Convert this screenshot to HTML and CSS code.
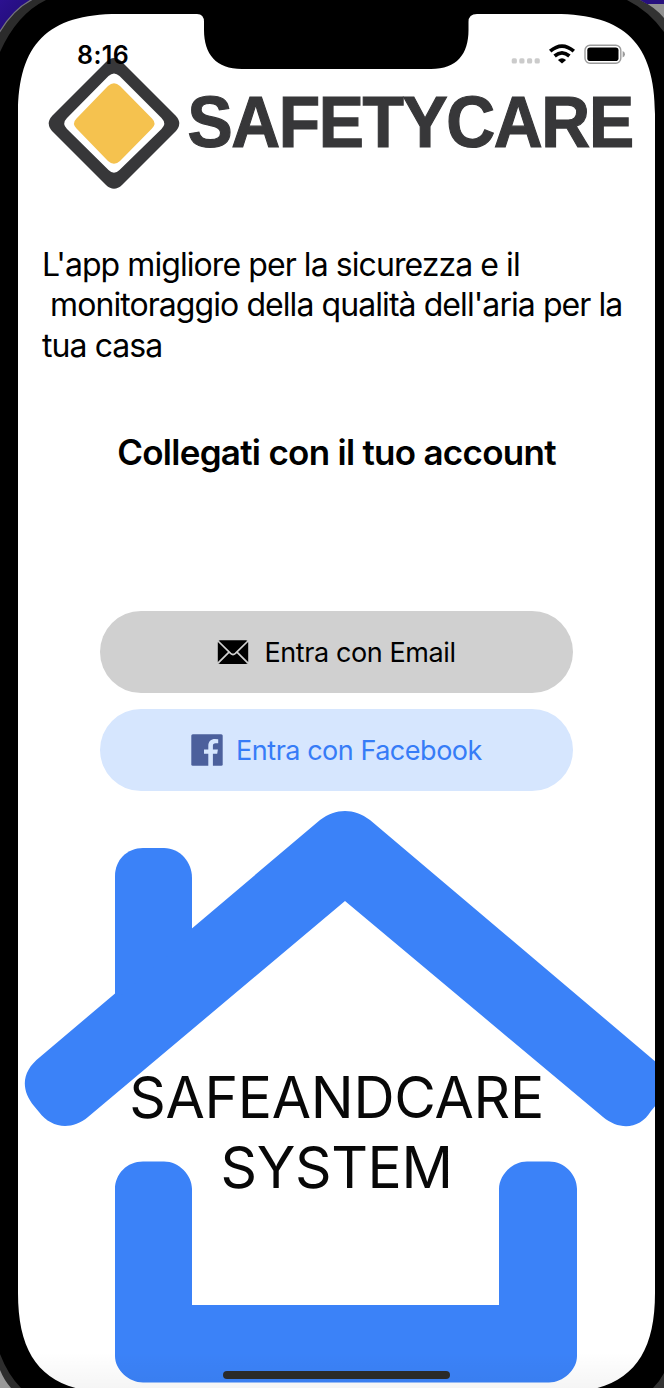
FILE: index.html
```html
<!DOCTYPE html>
<html lang="it">
<head>
<meta charset="utf-8">
<meta name="viewport" content="width=device-width, initial-scale=1">
<title>Safetycare</title>
<link rel="stylesheet" href="styles.css">
</head>
<body>
<div class="device">
  <main class="screen">
    <header class="status">
      <time class="clock">8:16</time>
      <svg class="status-icons" width="114" height="22" viewBox="511 43 114 22" aria-hidden="true">
        <g fill="#cbcbcb">
          <rect x="511.700" y="58.300" width="5.200" height="5.200" rx="1.600"/><rect x="519.300" y="58.300" width="5.200" height="5.200" rx="1.600"/><rect x="527" y="58.300" width="5.200" height="5.200" rx="1.600"/><rect x="534.600" y="58.300" width="5.200" height="5.200" rx="1.600"/>
        </g>
        <g fill="none" stroke="#000" stroke-width="3.700">
          <path d="M550.200 51.200Q562 41 573.800 51.200"/>
          <path d="M554.600 56Q562 49.800 569.400 56"/>
        </g>
        <path d="M557.900 59.900Q562 56.600 566.100 59.900L562 63.600Z"/>
        <rect x="585" y="45.200" width="35.800" height="18" rx="5" fill="none" stroke="#9b9b9b" stroke-width="1.400"/>
        <rect x="587.300" y="47.500" width="31.200" height="13.500" rx="2.800"/>
        <path d="M622.600 51Q625 52 625 54.200T622.600 57.400Z" fill="#9b9b9b"/>
      </svg>
    </header>

    <svg class="logo" width="608" height="136" viewBox="46 56 608 136" role="img" aria-label="Safetycare">
      <path d="M106 62Q114 54 122 62L175.500 115.500Q183 123.500 175.500 131.500L122 185Q114 192.500 106 185L52.500 131.500Q45 123.500 52.500 115.500Z" fill="#373739"/>
      <path d="M108.500 76Q114 71 119.500 76L161.500 118Q167 123.500 161.500 129L119.500 170Q114 175.500 108.500 170L67 129Q61.500 123.500 67 118Z" fill="#fff"/>
      <path d="M108 86Q114 80.500 120 86L152 118.500Q157 123.500 152 128.500L120 161Q114 166.500 108 161L76.500 128.500Q71.500 123.500 76.500 118.500Z" fill="#f5c24f"/>
      <text class="logo-text" transform="translate(187.500 146.500) scale(.928 1)">SAFETYCARE</text>
    </svg>

    <p class="intro">L'app migliore per la sicurezza e il<br>&nbsp;monitoraggio della qualità dell'aria per la<br>tua casa</p>
    <h1 class="title">Collegati con il tuo account</h1>

    <div class="actions">
      <button class="btn btn-email">
        <svg width="32" height="26" viewBox="0 0 32 26" aria-hidden="true">
          <rect x=".8" y="1.200" width="30.400" height="23.800" rx="2.500"/>
          <path d="M1 2L13.600 14.400Q16 16.600 18.400 14.400L31 2M1 24.200L12 13.200M31 24.200L20 13.200" fill="none" stroke="#d0d0d0" stroke-width="1.700"/>
        </svg>
        <span>Entra con Email</span>
      </button>
      <button class="btn btn-facebook">
        <svg width="32" height="32" viewBox="0 0 32 32" aria-hidden="true">
          <rect x=".3" y=".3" width="31.400" height="31.400" rx="1.500" fill="#4c609c"/>
          <path d="M17.300 32V19.800H13V15.400H17.300V12.200C17.300 7.300 20 4.900 24 4.900Q26 4.900 27.200 5.200V9.200H24.700C22.500 9.200 21.900 10.200 21.900 12V15.400H26.900L26.200 19.800H21.900V32Z" fill="#d6e6fe"/>
        </svg>
        <span>Entra con Facebook</span>
      </button>
    </div>

    <section class="house">
      <svg class="house-shape" width="637" height="597" viewBox="18 791 637 597" aria-hidden="true">
        <g fill="#3b82f8">
          <path d="M320 820C336 808 354 808 370 820L650 1057C668 1071 670 1088 656 1105L651 1111C640 1129 620 1131 603 1117L345 901L88 1117C71 1131 51 1128 39 1112L34 1106C20 1089 22 1071 40 1057Z"/>
          <path d="M115 1000V876C115 860 127 848 143 848H164C180 848 192 862 192 878V935Z"/>
          <path d="M115 1189C115 1174 127 1161.500 143 1161.500H164C179 1161.500 192 1175 192 1189V1305H499V1189C499 1175 512 1161.500 527 1161.500H549C565 1161.500 577 1175 577 1189V1356C577 1370 563 1382.500 549 1382.500H143C129 1382.500 115 1370 115 1356Z"/>
        </g>
      </svg>
      <p class="house-name"><span class="name-top">SAFEANDCARE</span><br><span class="name-bottom">SYSTEM</span></p>
    </section>
    <div class="home-bar"></div>
  </main>

  <svg class="bezel" width="664" height="1388" viewBox="0 0 664 1388" aria-hidden="true">
    <defs>
      <linearGradient id="wall" x2="1" y2="1"><stop stop-color="#2c1190"/><stop offset="1" stop-color="#1e0b70"/></linearGradient>
    </defs>
    <path fill-rule="evenodd" d="M0 0H664V1388H0ZM18 114C18 44 48 14 118 14H197Q204 14 204 22V30C204 54 216 69 242 69H431C457 69 468.500 54 468.500 30V22Q468.500 14 477 14H555C625 14 655 44 655 114V1293C655 1363 625 1393 555 1393H118C48 1393 18 1363 18 1293Z"/>
    <path d="M0 0H46Q17 14 0 52Z" fill="#2b2b2b"/>
    <path d="M0 0H32Q13 10 0 32Z" fill="url(#wall)"/>
    <path d="M33 -1Q13 9 -1 33" fill="none" stroke="#777" stroke-width="1.200"/>
    <path d="M627 0H664V32Q649 11 627 0Z" fill="#333"/>
    <path d="M640 0H664V18Q655 7 640 0Z" fill="#929292"/>
    <path d="M640 0H664V4H647Z" fill="#27107e"/>
    <path d="M0 1354Q8 1375 21 1388H0Z" fill="#2d2d2d"/>
    <path d="M0 1370Q4 1380 11 1388H0Z" fill="#999"/>
    <path d="M664 1373Q660 1381 653 1388H664Z" fill="#333"/>
  </svg>
</div>
</body>
</html>
```
FILE: styles.css
```css
* { box-sizing: border-box; }
body {
  margin: 0;
  background: #000;
  color: #000;
  font-family: Inter, "Liberation Sans", sans-serif;
}
.device {
  position: relative;
  width: 664px;
  height: 1388px;
  padding: 14px 9px 0 18px;
  overflow: hidden;
}
.screen {
  position: relative;
  height: 1374px;
  display: flex;
  flex-direction: column;
  background: #fff;
  overflow: hidden;
}
.bezel { position: absolute; inset: 0; pointer-events: none; }
.status {
  position: relative;
  z-index: 1;
  display: flex;
  justify-content: space-between;
  height: 42px;
  padding: 29px 30px 0 59px;
}
.clock {
  font-size: 25px;
  line-height: 24px;
  font-weight: 600;
  letter-spacing: 0.4px;
}
.logo { flex: none; margin-left: 28px; }
.logo-text {
  font-family: "Liberation Sans", sans-serif;
  font-size: 73px;
  font-weight: 700;
  letter-spacing: -1.5px;
  fill: #373739;
  stroke: #373739;
  stroke-width: 1.2px;
}
.intro {
  margin: 52.5px 0 0 24px;
  font-size: 32px;
  line-height: 40.8px;
  letter-spacing: -0.93px;
  white-space: nowrap;
}
.title {
  margin: 63.5px 0 0;
  font-size: 35px;
  line-height: 44px;
  font-weight: 600;
  letter-spacing: -0.72px;
  text-align: center;
}
.actions {
  display: flex;
  flex-direction: column;
  gap: 16px;
  margin: 137px 82px 0;
}
.btn {
  display: flex;
  align-items: center;
  justify-content: center;
  height: 82px;
  border: 0;
  border-radius: 41px;
  font: 400 27px Inter, sans-serif;
  letter-spacing: -0.4px;
}
.btn-email { gap: 15px; background: #d0d0d0; color: #000; }
.btn-facebook { gap: 13px; background: #d6e6fe; color: #367cf7; letter-spacing: -0.48px; }
.house { display: grid; height: 597px; flex: none; }
.house-shape, .house-name { grid-area: 1 / 1; }
.house-name {
  margin: 272px 0 0;
  font-size: 57px;
  line-height: 70px;
  text-align: center;
  color: #080808;
}
.name-top { letter-spacing: -0.3px; }
.name-bottom { letter-spacing: -0.4px; }
.home-bar {
  position: absolute;
  left: 205px;
  bottom: 9px;
  width: 227px;
  height: 8px;
  border-radius: 4px;
  background: #2b2b2b;
}
.screen::after {
  content: "";
  position: absolute;
  inset: auto 0 0;
  height: 36px;
  background: linear-gradient(transparent, rgba(0, 0, 0, .04));
}
```
